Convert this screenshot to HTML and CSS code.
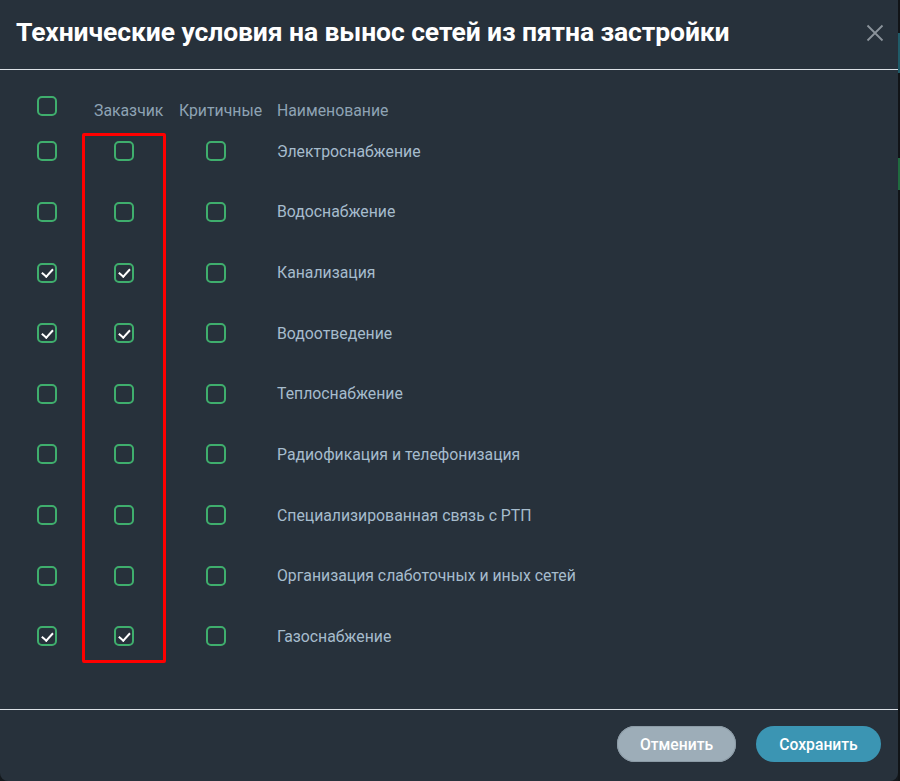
FILE: index.html
```html
<!DOCTYPE html>
<html lang="ru">
<head>
<meta charset="utf-8">
<title>Технические условия</title>
<link rel="stylesheet" href="styles.css">
</head>
<body>
<div class="page">
  <div class="modal">
    <div class="modal-header">
      <h1 class="title">Технические условия на вынос сетей из пятна застройки</h1>
      <button class="close" aria-label="Закрыть">
        <svg width="18" height="18" viewBox="0 0 18 18"><path d="M1.5 1.5 L16.5 16.5 M16.5 1.5 L1.5 16.5" stroke="#8b939b" stroke-width="1.8" fill="none"/></svg>
      </button>
    </div>
    <div class="modal-body">
      <div class="table">
        <div class="row head">
          <div class="c1"><span class="cb"></span></div>
          <div class="c2 label">Заказчик</div>
          <div class="c3 label">Критичные</div>
          <div class="c4 label">Наименование</div>
        </div>
        <div class="row"><div class="c1"><span class="cb"></span></div><div class="c2"><span class="cb"></span></div><div class="c3"><span class="cb"></span></div><div class="c4 name">Электроснабжение</div></div>
        <div class="row"><div class="c1"><span class="cb"></span></div><div class="c2"><span class="cb"></span></div><div class="c3"><span class="cb"></span></div><div class="c4 name">Водоснабжение</div></div>
        <div class="row"><div class="c1"><span class="cb on"></span></div><div class="c2"><span class="cb on"></span></div><div class="c3"><span class="cb"></span></div><div class="c4 name">Канализация</div></div>
        <div class="row"><div class="c1"><span class="cb on"></span></div><div class="c2"><span class="cb on"></span></div><div class="c3"><span class="cb"></span></div><div class="c4 name">Водоотведение</div></div>
        <div class="row"><div class="c1"><span class="cb"></span></div><div class="c2"><span class="cb"></span></div><div class="c3"><span class="cb"></span></div><div class="c4 name">Теплоснабжение</div></div>
        <div class="row"><div class="c1"><span class="cb"></span></div><div class="c2"><span class="cb"></span></div><div class="c3"><span class="cb"></span></div><div class="c4 name">Радиофикация и телефонизация</div></div>
        <div class="row"><div class="c1"><span class="cb"></span></div><div class="c2"><span class="cb"></span></div><div class="c3"><span class="cb"></span></div><div class="c4 name">Специализированная связь с РТП</div></div>
        <div class="row"><div class="c1"><span class="cb"></span></div><div class="c2"><span class="cb"></span></div><div class="c3"><span class="cb"></span></div><div class="c4 name">Организация слаботочных и иных сетей</div></div>
        <div class="row"><div class="c1"><span class="cb on"></span></div><div class="c2"><span class="cb on"></span></div><div class="c3"><span class="cb"></span></div><div class="c4 name">Газоснабжение</div></div>
        <div class="highlight"></div>
      </div>
    </div>
    <div class="modal-footer">
      <button class="btn btn-cancel">Отменить</button>
      <button class="btn btn-save">Сохранить</button>
    </div>
  </div>
  <div class="side"><span class="side-teal"></span><span class="side-green"></span></div>
</div>
</body>
</html>
```
FILE: styles.css
```css
* { box-sizing: border-box; }
html, body { margin: 0; padding: 0; }
body {
  background: #14191d;
  font-family: Roboto, "Noto Sans", sans-serif;
  width: 900px;
  height: 781px;
  overflow: hidden;
}
.page {
  display: flex;
  height: 781px;
}
.modal {
  width: 898px;
  height: 781px;
  background: #27313b;
  border-radius: 0 0 8px 8px;
  display: flex;
  flex-direction: column;
}
.modal-header {
  height: 70px;
  border-bottom: 1px solid #dce1e6;
  display: flex;
  align-items: flex-start;
  justify-content: space-between;
  padding: 0 14px 0 16px;
}
.title {
  margin: 17px 0 0;
  font-size: 26.5px;
  font-weight: 700;
  color: #ffffff;
  letter-spacing: -0.1px;
  line-height: 30px;
}
.close {
  margin-top: 24px;
  background: none;
  border: 0;
  padding: 0;
  width: 18px;
  height: 18px;
  display: flex;
}
.modal-body {
  height: 640px;
  border-bottom: 1px solid #dce1e6;
  padding: 0 0 0 37px;
}
.table {
  position: relative;
  padding-top: 26px;
}
.row {
  display: grid;
  grid-template-columns: 57px 85px 98px 1fr;
  height: 60.625px;
  align-items: center;
}
.row.head {
  height: 25px;
}
.head .c1 { align-self: start; }
.label {
  color: #8ea3b4;
  font-size: 15.8px;
  padding-top: 3px;
}
.name {
  color: #a6bccd;
  font-size: 15.8px;
}
.c1, .c2, .c3 { display: flex; }
.row:not(.head) .c2 { padding-left: 20px; }
.row:not(.head) .c3 { padding-left: 27px; }
.cb {
  width: 20px;
  height: 20px;
  border: 2px solid #3fae6d;
  border-radius: 5px;
  display: block;
  position: relative;
}
.cb.on::after {
  content: "";
  position: absolute;
  left: 5px;
  top: 1.5px;
  width: 4.5px;
  height: 9px;
  border-right: 2.4px solid #ffffff;
  border-bottom: 2.4px solid #ffffff;
  transform: rotate(42deg);
}
.highlight {
  position: absolute;
  left: 45px;
  top: 63px;
  width: 84px;
  height: 530px;
  border: 3px solid #ff0000;
  border-radius: 2px;
  pointer-events: none;
}
.modal-footer {
  flex: 1;
  display: flex;
  justify-content: flex-end;
  align-items: flex-start;
  gap: 20px;
  padding: 16px 17px 0 0;
}
.btn {
  height: 36px;
  border: 0;
  border-radius: 18px;
  color: #ffffff;
  font-family: Roboto, "Noto Sans", sans-serif;
  font-size: 15.7px;
  font-weight: 500;
  padding: 0;
}
.btn-cancel {
  width: 119px;
  background: #9dadb8;
  box-shadow: inset 0 0 0 1px #8c9ba6;
}
.btn-save {
  width: 125px;
  background: #3b95b3;
}
.side {
  width: 2px;
  height: 781px;
  background: #111417;
  display: flex;
  flex-direction: column;
}
.side-teal {
  display: block;
  margin-top: 33px;
  height: 40px;
  background: #1f5b68;
}
.side-green {
  display: block;
  margin-top: 85px;
  height: 32px;
  background: #1f6b3e;
}
```
